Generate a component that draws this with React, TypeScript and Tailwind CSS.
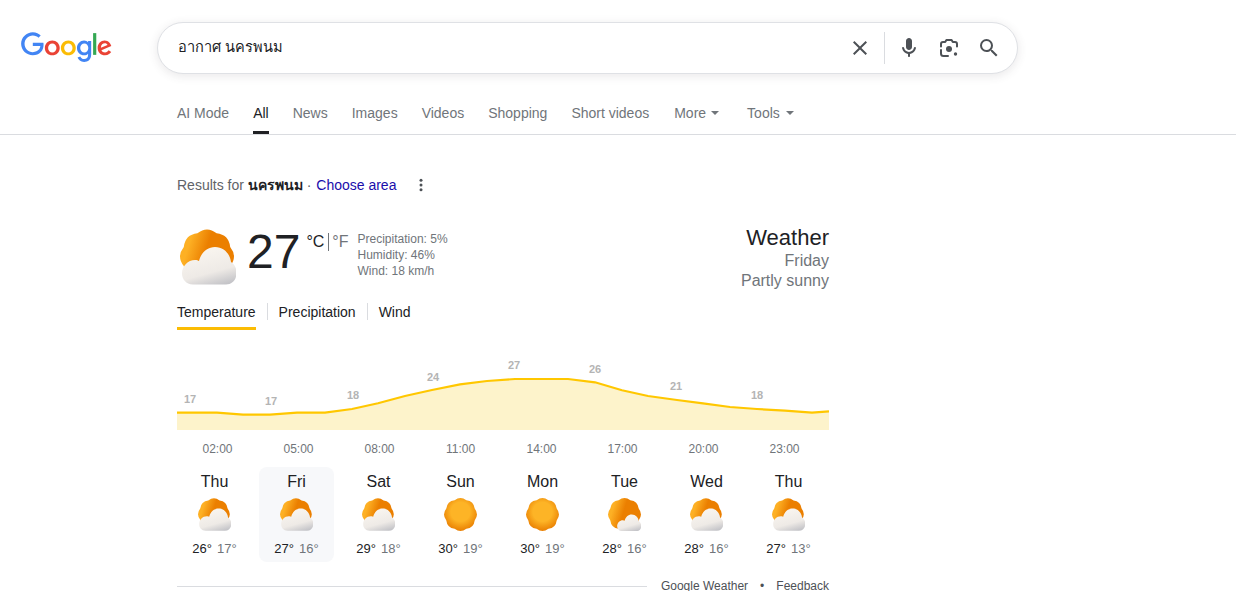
const tabs = ['AI Mode', 'All', 'News', 'Images', 'Videos', 'Shopping', 'Short videos'];
const hours = ['02:00', '05:00', '08:00', '11:00', '14:00', '17:00', '20:00', '23:00'];

const days = [
  { name: 'Thu', hi: 26, lo: 17, kind: 'partly' },
  { name: 'Fri', hi: 27, lo: 16, kind: 'partly', active: true },
  { name: 'Sat', hi: 29, lo: 18, kind: 'partly' },
  { name: 'Sun', hi: 30, lo: 19, kind: 'sun' },
  { name: 'Mon', hi: 30, lo: 19, kind: 'sun' },
  { name: 'Tue', hi: 28, lo: 16, kind: 'mostly' },
  { name: 'Wed', hi: 28, lo: 16, kind: 'partly' },
  { name: 'Thu', hi: 27, lo: 13, kind: 'partly' },
];

// chart coords, traced from the reference
const line = '0,62.7 40,62.7 66,64.7 93,64.7 120,62.7 148,62.7 175,59 201,53.3 228,46 255,40 283,34.3 310,31 338,29 391,29 418,32.3 445,40.3 471,46 500,50 526,53.3 553,57 580,59 608,60.7 635,62.7 652,61.3';
const labels = [
  { x: 13, y: 53, t: '17' },
  { x: 94, y: 55, t: '17' },
  { x: 176, y: 49, t: '18' },
  { x: 256, y: 31, t: '24' },
  { x: 337, y: 19, t: '27' },
  { x: 418, y: 23, t: '26' },
  { x: 499, y: 40, t: '21' },
  { x: 580, y: 49, t: '18' },
];

// scalloped sun outline, r is the lobe peak, one lobe points straight up
function scallop(cx: number, cy: number, r: number) {
  const n = 8;
  const start = -Math.PI / 2 - Math.PI / n;
  let d = '';
  for (let i = 0; i < n; i++) {
    const a0 = start + (i / n) * Math.PI * 2;
    const a1 = start + ((i + 0.5) / n) * Math.PI * 2;
    const a2 = start + ((i + 1) / n) * Math.PI * 2;
    const inner = r * 0.93;
    const p0 = [cx + inner * Math.cos(a0), cy + inner * Math.sin(a0)];
    const c = [cx + r * 1.14 * Math.cos(a1), cy + r * 1.14 * Math.sin(a1)];
    const p2 = [cx + inner * Math.cos(a2), cy + inner * Math.sin(a2)];
    if (i === 0) d += `M${p0[0].toFixed(2)} ${p0[1].toFixed(2)}`;
    d += `Q${c[0].toFixed(2)} ${c[1].toFixed(2)} ${p2[0].toFixed(2)} ${p2[1].toFixed(2)}`;
  }
  return d + 'Z';
}

const cloud = 'M13 55.5C6 55.5 2 50 2 44.5C2 37 8 31 15 31C17 31 18 31.5 19 32C21 24 27 18 35 18C44 18 50 25 51 33C54.5 35 57 40 56.5 45C56 51 52 55.5 46 55.5Z';

function WeatherIcon({ kind, size }: { kind: string; size: string }) {
  return (
    <svg viewBox="0 0 56 56" className={size}>
      <defs>
        <radialGradient id="sunFull" cx="50%" cy="42%" r="58%">
          <stop offset="0.5" stopColor="#fdb426" />
          <stop offset="1" stopColor="#e97f02" />
        </radialGradient>
        <linearGradient id="sunPart" x1="0.1" y1="0.25" x2="0.75" y2="0.45">
          <stop offset="0.1" stopColor="#fdb024" />
          <stop offset="0.6" stopColor="#eb7f00" />
        </linearGradient>
        <linearGradient id="cloudFill" x1="0.35" y1="0" x2="0.75" y2="1">
          <stop offset="0" stopColor="#faf6f0" />
          <stop offset="0.65" stopColor="#eeeae6" />
          <stop offset="1" stopColor="#c4c4c8" />
        </linearGradient>
      </defs>
      {kind === 'partly' && (
        <>
          <path d={scallop(27, 27.5, 27)} fill="url(#sunPart)" />
          <path d={cloud} fill="url(#cloudFill)" />
        </>
      )}
      {kind === 'sun' && <path d={scallop(28, 28, 28)} fill="url(#sunFull)" />}
      {kind === 'mostly' && (
        <>
          <path d={scallop(28, 28, 28)} fill="url(#sunPart)" />
          <path d={cloud} fill="url(#cloudFill)" transform="translate(14 14.5) scale(0.75)" />
        </>
      )}
    </svg>
  );
}

function GoogleLogo() {
  return (
    <svg viewBox="0 0 272 92" className="w-[91px] h-[31px]">
      <path fill="#EA4335" d="M115.75 47.18c0 12.77-9.99 22.18-22.25 22.18s-22.25-9.41-22.25-22.18C71.25 34.32 81.24 25 93.5 25s22.25 9.32 22.25 22.18zm-9.74 0c0-7.98-5.79-13.44-12.51-13.44S80.99 39.2 80.99 47.18c0 7.9 5.79 13.44 12.51 13.44s12.51-5.55 12.51-13.44z" />
      <path fill="#FBBC05" d="M163.75 47.18c0 12.77-9.99 22.18-22.25 22.18s-22.25-9.41-22.25-22.18c0-12.85 9.99-22.18 22.25-22.18s22.25 9.32 22.25 22.18zm-9.74 0c0-7.98-5.79-13.44-12.51-13.44s-12.51 5.46-12.51 13.44c0 7.9 5.79 13.44 12.51 13.44s12.51-5.55 12.51-13.44z" />
      <path fill="#4285F4" d="M209.75 26.34v39.82c0 16.38-9.66 23.07-21.08 23.07-10.75 0-17.22-7.19-19.66-13.07l8.48-3.53c1.51 3.61 5.21 7.87 11.17 7.87 7.31 0 11.84-4.51 11.84-13v-3.19h-.34c-2.18 2.69-6.38 5.04-11.68 5.04-11.09 0-21.25-9.66-21.25-22.09 0-12.52 10.16-22.26 21.25-22.26 5.29 0 9.49 2.35 11.68 4.96h.34v-3.61h9.25zm-8.56 20.92c0-7.81-5.21-13.52-11.84-13.52-6.72 0-12.35 5.71-12.35 13.52 0 7.73 5.63 13.36 12.35 13.36 6.63 0 11.84-5.63 11.84-13.36z" />
      <path fill="#34A853" d="M225 3v65h-9.5V3h9.5z" />
      <path fill="#EA4335" d="M262.02 54.48l7.56 5.04c-2.44 3.61-8.32 9.83-18.48 9.83-12.6 0-22.01-9.74-22.01-22.18 0-13.19 9.49-22.18 20.92-22.18 11.51 0 17.14 9.16 18.98 14.11l1.01 2.52-29.65 12.28c2.27 4.45 5.8 6.72 10.75 6.72 4.96 0 8.4-2.44 10.92-6.14zm-23.27-7.98l19.82-8.23c-1.09-2.77-4.37-4.7-8.23-4.7-4.95 0-11.84 4.37-11.59 12.93z" />
      <path fill="#4285F4" d="M35.29 41.41V32H67c.31 1.64.47 3.58.47 5.68 0 7.06-1.93 15.79-8.15 22.01-6.05 6.3-13.78 9.66-24.02 9.66C16.32 69.35.36 53.89.36 34.91.36 15.93 16.32.47 35.3.47c10.5 0 17.98 4.12 23.6 9.49l-6.64 6.64c-4.03-3.78-9.49-6.72-16.97-6.72-13.86 0-24.7 11.17-24.7 25.03 0 13.86 10.84 25.03 24.7 25.03 8.99 0 14.11-3.61 17.39-6.89 2.66-2.66 4.41-6.46 5.1-11.65l-22.49.01z" />
    </svg>
  );
}

function SearchBox() {
  return (
    <div className="w-[861px] h-[52px] rounded-full border border-[#dfe1e5] bg-white shadow-[0_2px_8px_1px_rgba(64,60,67,0.1)] flex items-center pl-5 pr-[16px]">
      <span className="flex-1 text-[14.6px] text-[#202124]">อากาศ นครพนม</span>
      <svg viewBox="0 0 24 24" className="w-6 h-6 fill-[#4d5156] mr-[12px]">
        <path d="M19 6.41L17.59 5 12 10.59 6.41 5 5 6.41 10.59 12 5 17.59 6.41 19 12 13.41 17.59 19 19 17.59 13.41 12z" />
      </svg>
      <div className="w-px h-[32px] bg-[#dadce0] mr-[12px]" />
      <svg viewBox="0 0 24 24" className="w-6 h-6 fill-[#4d5156] mr-[16px]">
        <path d="M12 14c1.66 0 3-1.34 3-3V5c0-1.66-1.34-3-3-3S9 3.34 9 5v6c0 1.66 1.34 3 3 3zm5.91-3c-.49 0-.9.36-.98.85C16.52 14.2 14.47 16 12 16s-4.52-1.8-4.93-4.15c-.08-.49-.49-.85-.98-.85-.61 0-1.09.54-1 1.14.49 3 2.89 5.35 5.91 5.78V20c0 .55.45 1 1 1s1-.45 1-1v-2.08c3.02-.43 5.42-2.78 5.91-5.78.1-.6-.39-1.14-1-1.14z" />
      </svg>
      <svg viewBox="0 0 24 24" className="w-6 h-6 mr-[16px]">
        <g fill="none" stroke="#4d5156" strokeWidth="2" strokeLinecap="round" strokeLinejoin="round">
          <path d="M4 10.5V8a2 2 0 0 1 2-2h2.2l1.2-2h5.2l1.2 2H18a2 2 0 0 1 2 2v2.5" />
          <path d="M4 14v3.5A2.5 2.5 0 0 0 6.5 20H11" />
        </g>
        <circle cx="12" cy="13" r="3" fill="#4d5156" />
        <circle cx="18.5" cy="18" r="1.7" fill="#4d5156" />
      </svg>
      <svg viewBox="0 0 24 24" className="w-6 h-6 fill-[#4d5156]">
        <path d="M15.5 14h-.79l-.28-.27A6.471 6.471 0 0 0 16 9.5 6.5 6.5 0 1 0 9.5 16c1.61 0 3.09-.59 4.23-1.57l.27.28v.79l5 4.99L20.49 19l-4.99-5zm-6 0C7.01 14 5 11.99 5 9.5S7.01 5 9.5 5 14 7.01 14 9.5 11.99 14 9.5 14z" />
      </svg>
    </div>
  );
}

function Chart() {
  return (
    <svg viewBox="0 0 652 80" className="w-[652px] h-[80px] mt-[20px] block">
      <polygon points={`0,80 ${line} 652,80`} fill="#fdf3cb" />
      <polyline points={line} fill="none" stroke="#ffc700" strokeWidth="2.2" />
      {labels.map((l, i) => (
        <text key={i} x={l.x} y={l.y} textAnchor="middle" fontSize="11" fontWeight="700" fill="#b4b4b4">
          {l.t}
        </text>
      ))}
    </svg>
  );
}

export default function App() {
  return (
    <div className="h-[591px] overflow-hidden bg-white font-['Liberation_Sans','Noto_Sans',sans-serif] text-[14px]">
      <header className="flex items-start pt-[22px]">
        <div className="w-[157px] pl-[21px] pt-[10px]">
          <GoogleLogo />
        </div>
        <SearchBox />
      </header>

      <nav className="mt-[18px] h-[43px] border-b border-[#dadce0] pl-[177px] flex text-[#70757a]">
        <div className="flex gap-6">
          {tabs.map(t => (
            <div key={t} className={`relative h-[42px] flex items-center ${t === 'All' ? 'text-[#202124]' : ''}`}>
              {t}
              {t === 'All' && <div className="absolute left-0 right-0 bottom-0 h-[3px] bg-[#202124]" />}
            </div>
          ))}
        </div>
        <div className="h-[42px] flex items-center ml-[25px]">
          More
          <svg viewBox="0 0 8 4" className="w-2 h-1 ml-[5px] fill-[#70757a]"><path d="M0 0h8L4 4z" /></svg>
        </div>
        <div className="h-[42px] flex items-center ml-[28px]">
          Tools
          <svg viewBox="0 0 8 4" className="w-2 h-1 ml-[6px] fill-[#70757a]"><path d="M0 0h8L4 4z" /></svg>
        </div>
      </nav>

      <main className="ml-[177px] w-[652px]">
        <div className="mt-[40px] h-[20px] flex items-center text-[#5f6368]">
          <span>Results for&nbsp;</span>
          <span className="font-bold text-[#202124]">นครพนม</span>
          <span className="mr-px">&nbsp;·&nbsp;</span>
          <span className="text-[#1a0dab]">Choose area</span>
          <svg viewBox="0 0 4 14" className="w-1 h-[14px] ml-[23px] fill-[#4d5156]">
            <circle cx="2" cy="2.2" r="1.5" />
            <circle cx="2" cy="7" r="1.5" />
            <circle cx="2" cy="11.8" r="1.5" />
          </svg>
        </div>

        <div className="mt-[33px] flex justify-between">
          <div className="flex items-start">
            <WeatherIcon kind="partly" size="w-14 h-14 ml-[3px] mt-px" />
            <div className="ml-[11px] text-[48px] leading-[48px] text-[#202124]">27</div>
            <div className="ml-[6px] mt-[4px] flex items-center text-[16px] leading-[20px]">
              <span className="text-[#202124]">°C</span>
              <span className="w-px h-[18px] bg-[#70757a] mx-[3.5px]" />
              <span className="text-[#70757a]">°F</span>
            </div>
            <div className="ml-[9px] mt-[3px] text-[12px] leading-[16px] text-[#70757a]">
              <div>Precipitation: 5%</div>
              <div>Humidity: 46%</div>
              <div>Wind: 18 km/h</div>
            </div>
          </div>
          <div className="text-right text-[16px] leading-[20px] text-[#70757a]">
            <div className="text-[22px] leading-[20px] text-[#202124]">Weather</div>
            <div className="mt-[3px]">Friday</div>
            <div>Partly sunny</div>
          </div>
        </div>

        <div className="mt-[12px] flex text-[#202124]">
          <div className="h-[27px] border-b-[3px] border-[#fbbc04] leading-[18px]">Temperature</div>
          <div className="w-px h-[17px] bg-[#dadce0] mx-[11px]" />
          <div className="h-[27px] leading-[18px]">Precipitation</div>
          <div className="w-px h-[17px] bg-[#dadce0] mx-[11px]" />
          <div className="h-[27px] leading-[18px]">Wind</div>
        </div>

        <Chart />

        <div className="mt-[11px] flex text-[12px] leading-[16px] text-[#70757a]">
          {hours.map(h => (
            <div key={h} className="w-[81px] text-center">{h}</div>
          ))}
        </div>

        <div className="mt-[10px] flex gap-[7px]">
          {days.map((d, i) => (
            <div key={i} className={`w-[75px] h-[95px] rounded-[8px] pt-[3px] flex flex-col items-center ${d.active ? 'bg-[#f7f8fa]' : ''}`}>
              <div className="text-[16px] leading-[24px] text-[#202124]">{d.name}</div>
              <WeatherIcon kind={d.kind} size="w-[33px] h-[33px] mt-[4px]" />
              <div className="mt-[10px] flex gap-[5px] text-[13px] leading-[16px]">
                <span className="text-[#202124]">{d.hi}°</span>
                <span className="text-[#70757a]">{d.lo}°</span>
              </div>
            </div>
          ))}
        </div>

        <div className="mt-[19px] h-[10px] flex items-center text-[12px] leading-[10px] text-[#4d5156]">
          <div className="flex-1 h-px bg-[#dadce0]" />
          <span className="ml-[14px]">Google Weather</span>
          <span className="mx-[12px]">•</span>
          <span>Feedback</span>
        </div>
      </main>
    </div>
  );
}
